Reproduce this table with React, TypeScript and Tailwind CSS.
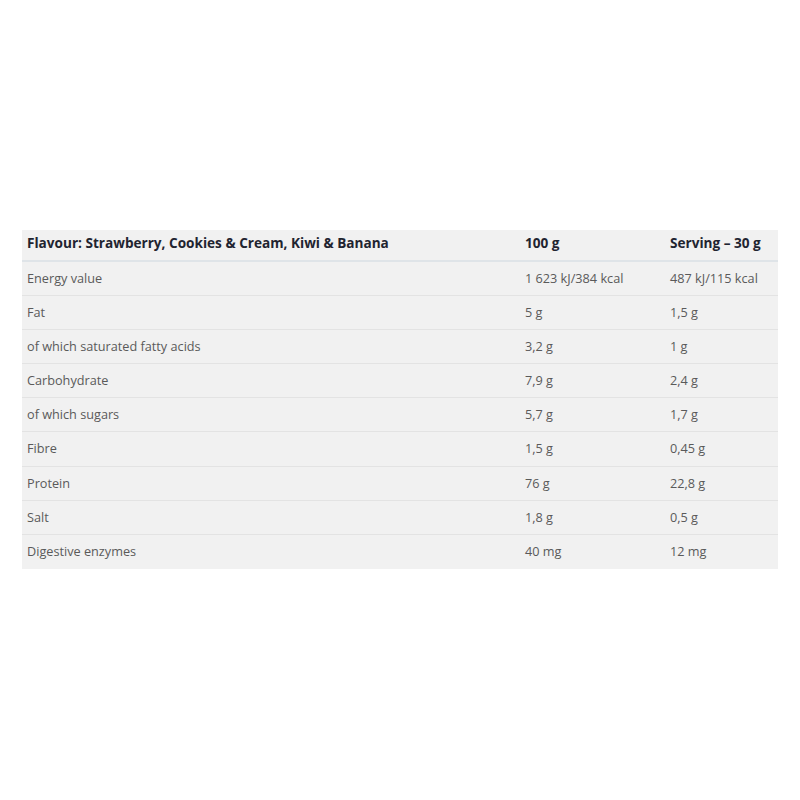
const rows = [
  ["Energy value", "1 623 kJ/384 kcal", "487 kJ/115 kcal"],
  ["Fat", "5 g", "1,5 g"],
  ["of which saturated fatty acids", "3,2 g", "1 g"],
  ["Carbohydrate", "7,9 g", "2,4 g"],
  ["of which sugars", "5,7 g", "1,7 g"],
  ["Fibre", "1,5 g", "0,45 g"],
  ["Protein", "76 g", "22,8 g"],
  ["Salt", "1,8 g", "0,5 g"],
  ["Digestive enzymes", "40 mg", "12 mg"],
];

export default function App() {
  return (
    <div className="w-[800px] h-[800px] bg-white pt-[230px] px-[22px] font-['Open_Sans',sans-serif]">
      <div className="bg-[#f1f1f1]">
        <div className="grid grid-cols-[498px_145px_1fr] h-[32px] pb-[3px] items-center border-b-2 border-[#dfe4e8] text-[13.6px] font-bold text-[#1f2430]">
          <div className="pl-[5px]">Flavour: Strawberry, Cookies &amp; Cream, Kiwi &amp; Banana</div>
          <div className="pl-[5px]">100 g</div>
          <div className="pl-[5px]">Serving – 30 g</div>
        </div>
        {rows.map((r, i) => (
          <div
            key={i}
            className={`grid grid-cols-[498px_145px_1fr] h-[34.1px] items-center text-[12.7px] text-[#5a5a5a] ${i < rows.length - 1 ? "border-b border-[#e3e3e3]" : ""}`}
          >
            <div className="pl-[5px]">{r[0]}</div>
            <div className="pl-[5px]">{r[1]}</div>
            <div className="pl-[5px]">{r[2]}</div>
          </div>
        ))}
      </div>
    </div>
  );
}
